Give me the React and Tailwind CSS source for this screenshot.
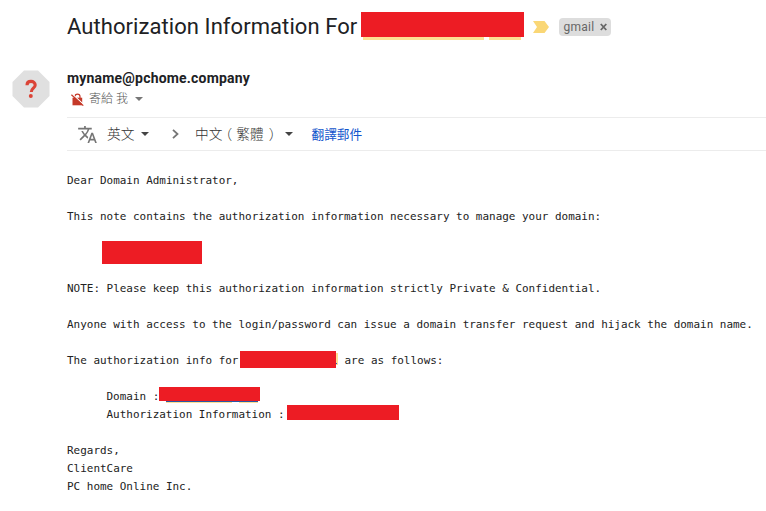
function Caret({ className }) {
  return (
    <svg viewBox="0 0 8 4" className={`h-1 w-2 shrink-0 ${className ?? ""}`} fill="currentColor">
      <path d="M0 0h8L4 4z" />
    </svg>
  );
}

function Line({ children }) {
  return <div className="flex h-[18px] whitespace-pre">{children}</div>;
}

function Subject() {
  return (
    <header className="flex h-[54px] pl-[67px]">
      <h1 className="w-[294px] shrink-0 whitespace-nowrap font-['Roboto','Liberation_Sans',sans-serif] text-[22px] leading-[54px] font-normal tracking-[0.070px] text-[#202124]">
        Authorization Information For
      </h1>
      <div className="mt-3 w-[163px] shrink-0">
        <div className="h-[25px] bg-[#ed1c24]" />
        <div className="flex pl-0.5">
          <div className="h-[3px] w-[121px] bg-[#fddf92]" />
          <div className="ml-[5px] h-[3px] w-8 bg-[#fddf92]" />
        </div>
      </div>
      <svg viewBox="0 0 16 12" className="mt-[21px] ml-[9px] h-3 w-4 shrink-0">
        <path d="M0 0h11.5L16 6l-4.500 6H0l4-6z" fill="#fad776" />
      </svg>
      <div className="mt-[18px] ml-2.5 flex h-[18px] w-[52px] shrink-0 items-center rounded-[4px] bg-[#ddd] pl-[4.500px] font-['Roboto',sans-serif] text-xs tracking-[0.25px] text-[#666]">
        <span className="w-[36px] leading-[18px]">gmail</span>
        <svg viewBox="0 0 8 8" className="h-2 w-2" fill="none" stroke="#666" strokeWidth="1.800">
          <path d="M.8 1l5.500 6M6.300 1L.8 7" />
        </svg>
      </div>
    </header>
  );
}

function Sender() {
  return (
    <section className="flex h-[63px] pl-3">
      <div className="w-[55px] shrink-0 pt-4">
        <svg viewBox="0 0 38 38" className="size-[38px]">
          <path d="M12 .5h14L37.500 12v14L26 37.500H12L.5 26V12z" fill="#e0e0e0" />
          <path d="M15 15.300c0-2.300 1.600-3.900 4-3.900s4.200 1.400 4.200 3.500c0 3.300-3.900 3.300-3.900 7" fill="none" stroke="#db4437" strokeWidth="3.100" />
          <circle cx="18.800" cy="26" r="2" fill="#db4437" />
        </svg>
      </div>
      <div className="pt-3.5">
        <div className="h-5 whitespace-nowrap font-['Roboto',sans-serif] text-sm leading-5 font-bold tracking-[0.190px] text-[#202124]">
          myname@pchome.company
        </div>
        <div className="flex h-[22px] items-center pl-1 text-[#555]">
          <svg viewBox="0 0 13 13" className="h-[13px] w-[13px] shrink-0">
            <path d="M4 5.500V3.600a2.500 2.500 0 0 1 5 0v1.900" fill="none" stroke="#c53929" strokeWidth="1.200" />
            <path d="M1.500 4.700h9.700v7.600H1.500z" fill="#c53929" />
            <path d="M1.400 1.200l11.200 10.300" stroke="#fff" strokeWidth="1.100" />
            <path d="M.4 1.700l11.900 10.900" stroke="#c53929" strokeWidth="1.200" />
          </svg>
          <span className="ml-[5px] w-[46px] whitespace-nowrap font-['Roboto','Noto_Sans_CJK_TC',sans-serif] text-xs leading-[22px] font-light">寄給 我</span>
          <Caret className="text-[#777]" />
        </div>
      </div>
    </section>
  );
}

function TranslateBar() {
  return (
    <nav className="ml-[67px] flex h-[34px] items-center border-y border-[#ececec] pl-[11px] font-['Noto_Sans_CJK_TC',sans-serif] text-[#333]">
      <svg viewBox="1 2 22 20" className="h-[17px] w-[19px] shrink-0" fill="#757575">
        <path d="M12.870 15.070l-2.540-2.510.03-.03A17.520 17.520 0 0 0 14.070 6H17V4h-7V2H8v2H1v2h11.170C11.500 7.920 10.440 9.750 9 11.350 8.070 10.320 7.300 9.190 6.690 8h-2c.73 1.630 1.730 3.170 2.980 4.560l-5.090 5.020L4 19l5-5 3.110 3.110.76-2.040zM18.500 10h-2L12 22h2l1.120-3h4.750L21 22h2l-4.500-12zm-2.620 7l1.620-4.330L19.120 17h-3.240z" />
      </svg>
      <span className="ml-2.5 w-[34px] whitespace-nowrap pb-0.5 text-[13.700px] leading-[30px] font-light">英文</span>
      <Caret className="text-[#444]" />
      <svg viewBox="0 0 7 10" className="ml-[23px] h-2.5 w-[7px] shrink-0" fill="none" stroke="#757575" strokeWidth="1.800">
        <path d="M1 .8L5.500 5 1 9.200" />
      </svg>
      <span className="ml-4 flex w-[90px] whitespace-nowrap pb-0.5 text-[13.700px] leading-[30px] font-light">
        <span>中文</span>
        <span className="ml-[3px] [font-feature-settings:'halt']">（</span>
        <span className="ml-[4px]">繁體</span>
        <span className="ml-[5px] [font-feature-settings:'halt']">）</span>
      </span>
      <Caret className="text-[#444]" />
      <span className="ml-[18.500px] whitespace-nowrap text-[12.700px] leading-8 font-normal text-[#15c]">翻譯郵件</span>
    </nav>
  );
}

function Message() {
  return (
    <main className="pt-[21px] pl-[67px] font-['DejaVu_Sans_Mono',monospace] text-[10.960px] leading-[18px] text-[#222]">
      <Line>Dear Domain Administrator,</Line>
      <Line />
      <Line>This note contains the authorization information necessary to manage your domain:</Line>
      <Line />
      <Line>
        <div className="-mt-[3px] ml-[35px] h-[23px] w-[100px] bg-[#ed1c24]" />
      </Line>
      <Line />
      <Line>NOTE: Please keep this authorization information strictly Private &amp; Confidential.</Line>
      <Line />
      <Line>Anyone with access to the login/password can issue a domain transfer request and hijack the domain name.</Line>
      <Line />
      <Line>
        <span className="w-[173px]">The authorization info for</span>
        <div className="-mt-px h-[17px] w-24 bg-[#ed1c24]" />
        <div className="mt-px flex h-3 w-0.5 items-end bg-[#fddf92]">
          <div className="mb-px h-px w-px bg-[#15c]" />
        </div>
        <span className="ml-[6.500px]">are as follows:</span>
      </Line>
      <Line />
      <Line>
        <span className="ml-[39.500px] w-[52.500px]">Domain :</span>
        <div className="-mt-px w-[101px]">
          <div className="h-3.5 bg-[#ed1c24]" />
          <div className="ml-[7px] h-px w-[92px] bg-[#2a56a5]" />
          <div className="flex gap-[7px] pl-[7px]">
            <div className="h-px w-[66px] bg-[#fddf92]" />
            <div className="h-px w-[19px] bg-[#fddf92]" />
          </div>
        </div>
      </Line>
      <Line>
        <span className="ml-[39.500px] w-[180.500px]">Authorization Information :</span>
        <div className="-mt-px h-[15px] w-28 bg-[#ed1c24]" />
      </Line>
      <Line />
      <Line>Regards,</Line>
      <Line>ClientCare</Line>
      <Line>PC home Online Inc.</Line>
    </main>
  );
}

export default function App() {
  return (
    <div className="h-[511px] w-[766px] overflow-hidden bg-white">
      <Subject />
      <Sender />
      <TranslateBar />
      <Message />
    </div>
  );
}
